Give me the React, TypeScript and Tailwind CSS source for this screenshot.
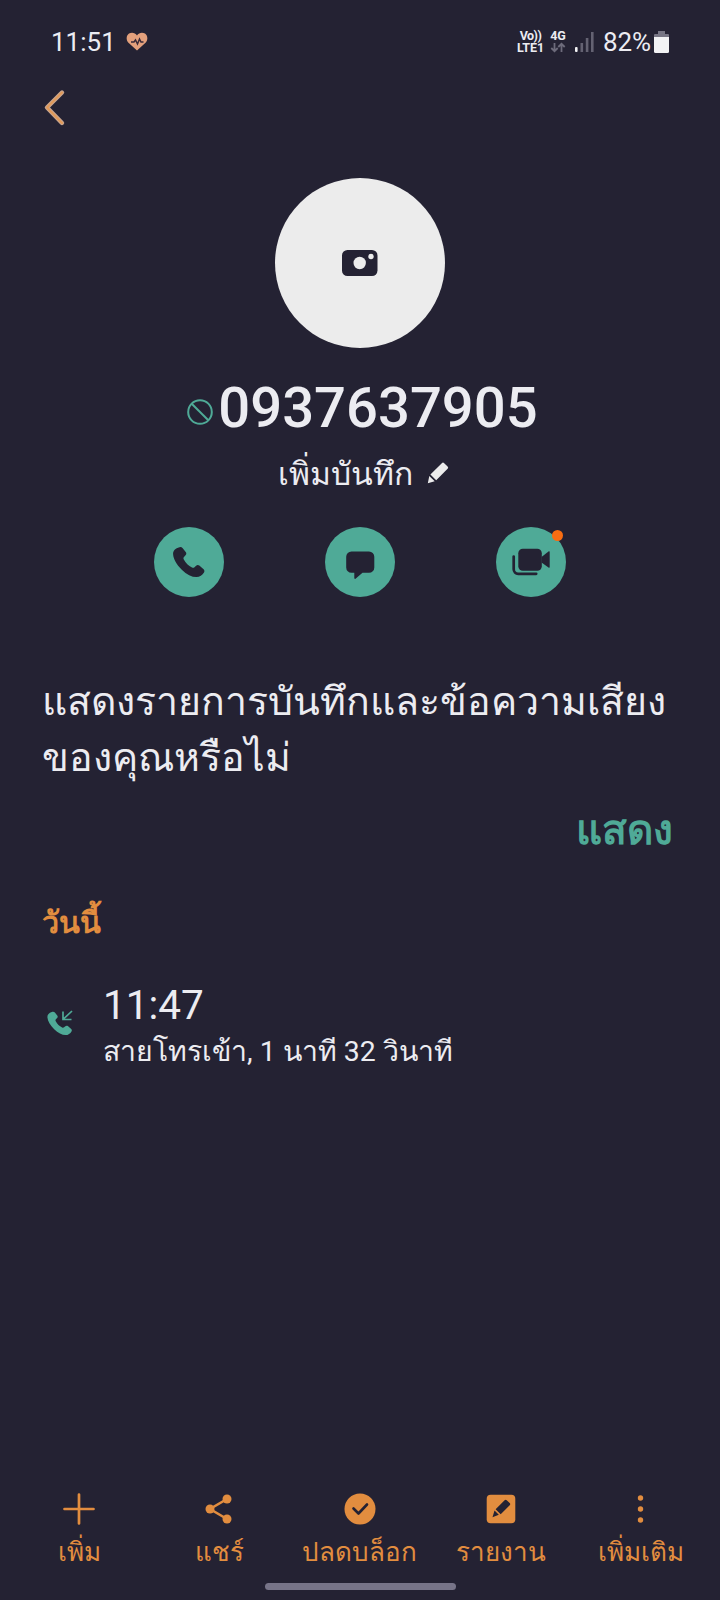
import type { ReactNode } from "react";

const HANDSET =
  "M24.700 20.600c1.500-.9 2.900-.6 4 .7l3 3.700c.9 1.100.8 2.200-.2 3.200l-1.500 1.700c-.7.8-.7 1.500-.2 2.500 2 3.700 4.600 6.200 8.200 8.100 1 .5 1.700.4 2.500-.3l1.600-1.400c1-1 2.100-1.100 3.200-.2l4 3.300c1.200 1 1.500 2.200.7 3.500-1.500 2.600-4.300 4.700-7.600 4.700-4.600 0-9.700-2.600-14.600-7.400-5-5-8.400-10.500-8.700-15.500-.2-3 1.900-5.500 5.600-6.600Z";

function StatusBar() {
  return (
    <header className="flex h-[82px] items-center pt-px pl-[51px] pr-[51px] text-[#ececf2]">
      <span className="text-[26px] leading-8">11:51</span>
      <svg className="ml-[10px] h-[20px] w-[22px]" viewBox="0 0 22 20">
        <path d="M11 18.500 2.200 10.400C-.2 7.800.3 3.400 3 1.600 5.800-.2 9.200.8 11 3.400 12.800.8 16.200-.2 19 1.600c2.700 1.800 3.200 6.200.8 8.800Z" fill="#e3a07c" />
        <path d="M5 10h3l1.500-2 2 4 2-5 1.500 3h2.500" fill="none" stroke="#3a2a38" strokeWidth="1.500" />
      </svg>
      <div className="ml-auto flex items-center">
        <div className="flex w-[27px] flex-col items-center text-[12.500px] leading-[12px] font-bold">
          <span className="tracking-[-0.5px]">Vo))</span>
          <span className="tracking-[-0.1px]">LTE1</span>
        </div>
        <div className="mr-px ml-[6px] flex w-4 flex-col items-center">
          <span className="text-[12.500px] leading-[12px] font-bold">4G</span>
          <svg className="h-[11px] w-4" viewBox="0 0 16 11" fill="none" stroke="#6d6b7b" strokeWidth="1.800">
            <path d="M4.500 1v8M1.300 6l3.200 3.200L7.700 6M11.500 10V2M8.300 5l3.200-3.200L14.700 5" />
          </svg>
        </div>
        <svg className="ml-[8px] mr-px h-[22px] w-[19px]" viewBox="0 0 19 22">
          <rect x="0" y="16" width="2.600" height="5" rx="1" fill="#f2f2f4" />
          <path d="M5.500 12h2.600v9H5.500zM10.800 7h2.600v14h-2.600zM16 1h2.600v20H16z" fill="#646272" />
        </svg>
        <span className="ml-[8px] text-[26px] leading-8 tracking-[-0.100px]">82%</span>
        <svg className="ml-[3px] h-[22px] w-[15px]" viewBox="0 0 15 22">
          <path d="M4 0h7v3h3a1 1 0 0 1 1 1v3H0V4a1 1 0 0 1 1-1h3z" fill="#777584" />
          <path d="M0 6h15v14.500a1.500 1.500 0 0 1-1.500 1.500h-12A1.500 1.500 0 0 1 0 20.500z" fill="#f2f2f4" />
        </svg>
      </div>
    </header>
  );
}

function RoundButton({ children, label, dot }: { children: ReactNode; label: string; dot?: boolean }) {
  return (
    <button aria-label={label} className="relative h-[70px] w-[70px] rounded-full bg-[#4faa97]">
      <svg className="h-[70px] w-[70px]" viewBox="0 0 70 70" fill="#242233">
        {children}
      </svg>
      {dot && <span className="absolute top-[3px] right-[3px] h-[11px] w-[11px] rounded-full bg-[#f96d12]" />}
    </button>
  );
}

function Action({ children, label, width }: { children: ReactNode; label: string; width: string }) {
  return (
    <button className={"flex flex-col items-center " + width}>
      <svg className="h-8 w-8" viewBox="0 0 32 32" fill="#e28d3f">
        {children}
      </svg>
      <span className="mt-[8px] text-[26px] leading-[38px] whitespace-nowrap">{label}</span>
    </button>
  );
}

export default function App() {
  return (
    <main className="flex h-[1600px] w-[720px] flex-col overflow-hidden bg-[#242233] font-[Roboto,sans-serif] text-[#ececf1]">
      <StatusBar />

      <nav className="flex h-[96px] pl-[43px] pt-[7px]">
        <button aria-label="ย้อนกลับ" className="h-[38px] w-6">
          <svg className="h-[38px] w-6" viewBox="0 0 24 38" fill="none" strokeLinecap="round" strokeLinejoin="round">
            <path d="M19 3.500 4 18.500 19 34" stroke="#c9a58e" strokeWidth="4.400" />
            <path d="M19 3.500 4 18.500 19 34" stroke="#e29a58" strokeWidth="2" />
          </svg>
        </button>
      </nav>

      <section className="flex flex-col items-center">
        <div className="flex h-[170px] w-[170px] items-center justify-center rounded-full bg-[#ececec]">
          <svg className="h-[26px] w-[36px]" viewBox="0 0 36 26">
            <rect width="35.500" height="26" rx="5.500" fill="#242233" />
            <circle cx="17.700" cy="13" r="6.200" fill="#ececec" />
            <circle cx="29" cy="6.500" r="2.700" fill="#ececec" />
          </svg>
        </div>
        <div className="mt-[24px] flex h-[72px] items-center pl-[5px]">
          <svg className="mt-[7px] mr-[5px] h-[26px] w-[26px]" viewBox="0 0 26 26" fill="none" stroke="#4faa97" strokeWidth="2">
            <circle cx="13" cy="13" r="11.800" />
            <path d="m4.700 4.700 16.600 16.600" />
          </svg>
          <h1 className="text-[56.200px] leading-[72px] font-medium">0937637905</h1>
        </div>
        <div className="mt-[6px] flex h-[48px] items-center pl-[7px]">
          <span className="text-[31.800px] leading-[48px]">เพิ่มบันทึก</span>
          <svg className="ml-[14px] mb-[2px] h-[22px] w-[22px]" viewBox="0 0 22 22" fill="#ececec">
            <path d="M14.800 1.200a1.700 1.700 0 0 1 2.400 0l3.400 3.200a1.700 1.700 0 0 1 0 2.400L9.200 18.200 3.400 12.600zM2.300 14l5.400 5.300L.8 21.300z" />
          </svg>
        </div>
        <div className="mt-[29px] flex gap-[101px]">
          <RoundButton label="โทร">
            <path d={HANDSET} />
          </RoundButton>
          <RoundButton label="ข้อความ">
            <path d="M26.500 24.500H44a5.300 5.300 0 0 1 5.300 5.300v10.700a5.300 5.300 0 0 1-5.300 5.300h-6.500l-7 5.900c-.6.500-1.200.2-1.200-.6v-5.300h-2.800a5.300 5.300 0 0 1-5.300-5.300V29.800a5.300 5.300 0 0 1 5.300-5.300Z" />
          </RoundButton>
          <RoundButton label="วิดีโอ" dot>
            <rect x="22.300" y="21.800" width="23.500" height="22" rx="4.500" />
            <path d="m45.500 30 7-5.500c.7-.5 1.200-.2 1.200.5v15c0 .7-.5 1-1.200.5l-7-5z" />
            <path d="M17.700 29.500v12.800a4.500 4.500 0 0 0 4.500 4.500h18" fill="none" stroke="#242233" strokeWidth="2.700" strokeLinecap="round" />
          </RoundButton>
        </div>
      </section>

      <section className="mt-[77px] flex flex-col px-[42px]">
        <p className="text-[39.250px] leading-[56px] whitespace-nowrap">
          แสดงรายการบันทึกและข้อความเสียง
          <br />
          ของคุณหรือไม่
        </p>
        <button className="mt-[16px] mr-[5px] self-end text-[40.600px] leading-[56px] font-bold text-[#4faa97]">แสดง</button>
      </section>

      <section className="mt-[41px] pl-[42px]">
        <h2 className="text-[30.500px] leading-[48px] font-bold text-[#e28d3f]">วันนี้</h2>
        <div className="mt-[34px] flex">
          <svg className="mt-[29px] ml-[5px] h-[26px] w-[26px]" viewBox="0 0 26 26" fill="#4faa97">
            <path transform="translate(-14.500 -14) scale(.78)" d={HANDSET} />
            <path d="M25 1 16.500 9M16 1.500V9.500h8.500" fill="none" stroke="#4faa97" strokeWidth="1.700" />
          </svg>
          <div className="ml-[30px] flex flex-col">
            <span className="text-[40.500px] leading-[48px]">11:47</span>
            <span className="mt-px text-[28.400px] leading-[44px] whitespace-nowrap">สายโทรเข้า, 1 นาที 32 วินาที</span>
          </div>
        </div>
      </section>

      <footer className="mt-auto flex h-[107px] flex-col text-[#e28d3f]">
        <div className="flex pl-[9px]">
          <Action label="เพิ่ม" width="w-[140px]">
            <path d="M16 1.500v29M1.500 16h29" stroke="#e28d3f" strokeWidth="2.700" strokeLinecap="round" />
          </Action>
          <Action label="แชร์" width="w-[140px]">
            <circle cx="7" cy="16" r="4.500" />
            <circle cx="24" cy="6" r="4.500" />
            <circle cx="24" cy="26" r="4.500" />
            <path d="M24 6 7 16l17 10" fill="none" stroke="#e28d3f" strokeWidth="2.600" />
          </Action>
          <Action label="ปลดบล็อก" width="w-[141px]">
            <circle cx="16" cy="16" r="15.500" />
            <path d="m9.500 15.500 5 5 8.500-9" fill="none" stroke="#242233" strokeWidth="2.600" strokeLinecap="round" strokeLinejoin="round" />
          </Action>
          <Action label="รายงาน" width="w-[141px]">
            <rect x="1.700" y="1.700" width="28.600" height="28.600" rx="4" />
            <path d="M19.600 7.200a1.500 1.500 0 0 1 2.100 0l3 2.900a1.500 1.500 0 0 1 0 2.100l-9 9-5.100-5zM9.500 17.500l4.300 4.300-6.300 2.400z" fill="#242233" />
          </Action>
          <Action label="เพิ่มเติม" width="w-[139px]">
            <circle cx="15.500" cy="5" r="2.700" />
            <circle cx="15.500" cy="16" r="2.700" />
            <circle cx="15.500" cy="27" r="2.700" />
          </Action>
        </div>
        <div className="mx-auto mt-auto mb-[10px] h-[7px] w-[191px] rounded-full bg-[#777488]" />
      </footer>
    </main>
  );
}
